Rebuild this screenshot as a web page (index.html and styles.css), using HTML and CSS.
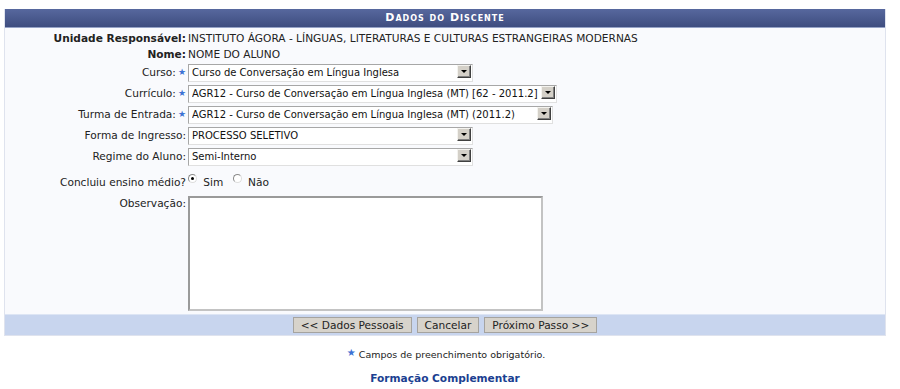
FILE: index.html
```html
<!DOCTYPE html>
<html lang="pt-BR">
<head>
    <meta charset="UTF-8">
    <meta name="viewport" content="width=device-width, initial-scale=1.0">
    <title>Dados do Discente</title>
    <link rel="stylesheet" href="styles.css">
</head>
<body>

    <form class="formulario">
        <div class="titulo">Dados do Discente</div>

        <div class="campos">
            <div class="rotulo negrito linha-texto">Unidade Responsável:</div>
            <div class="valor linha-texto">INSTITUTO ÁGORA - LÍNGUAS, LITERATURAS E CULTURAS ESTRANGEIRAS MODERNAS</div>

            <div class="rotulo negrito linha-texto">Nome:</div>
            <div class="valor linha-texto">NOME DO ALUNO</div>

            <div class="rotulo linha-combo primeiro">Curso:<span class="obrigatorio">&#9733;</span></div>
            <div class="valor linha-combo primeiro">
                <span class="combo largura-curta">
                    <select><option>Curso de Conversação em Língua Inglesa</option></select>
                    <span class="seta"></span>
                </span>
            </div>

            <div class="rotulo linha-combo">Currículo:<span class="obrigatorio">&#9733;</span></div>
            <div class="valor linha-combo">
                <span class="combo largura-curriculo">
                    <select><option>AGR12 - Curso de Conversação em Língua Inglesa (MT) [62 - 2011.2]</option></select>
                    <span class="seta"></span>
                </span>
            </div>

            <div class="rotulo linha-combo">Turma de Entrada:<span class="obrigatorio">&#9733;</span></div>
            <div class="valor linha-combo">
                <span class="combo largura-turma">
                    <select><option>AGR12 - Curso de Conversação em Língua Inglesa (MT) (2011.2)</option></select>
                    <span class="seta"></span>
                </span>
            </div>

            <div class="rotulo linha-combo">Forma de Ingresso:</div>
            <div class="valor linha-combo">
                <span class="combo largura-curta">
                    <select><option>PROCESSO SELETIVO</option></select>
                    <span class="seta"></span>
                </span>
            </div>

            <div class="rotulo linha-combo">Regime do Aluno:</div>
            <div class="valor linha-combo">
                <span class="combo largura-curta">
                    <select><option>Semi-Interno</option></select>
                    <span class="seta"></span>
                </span>
            </div>

            <div class="rotulo linha-radio">Concluiu ensino médio?</div>
            <div class="valor linha-radio">
                <label class="opcao"><input type="radio" name="medio" checked> Sim</label>
                <label class="opcao"><input type="radio" name="medio"> Não</label>
            </div>

            <div class="rotulo linha-obs">Observação:</div>
            <div class="valor linha-obs">
                <textarea class="observacao"></textarea>
            </div>
        </div>

        <div class="rodape">
            <button type="button">&lt;&lt; Dados Pessoais</button>
            <button type="button">Cancelar</button>
            <button type="button">Próximo Passo &gt;&gt;</button>
        </div>
    </form>

    <p class="aviso"><span class="obrigatorio">&#9733;</span> Campos de preenchimento obrigatório.</p>

    <p class="link-secao"><a href="#">Formação Complementar</a></p>

</body>
</html>
```

FILE: styles.css
```css
body {
    margin: 0;
    padding: 9px 14px 0 4px;
    font-family: "DejaVu Sans", Verdana, sans-serif;
    font-size: 10.6px;
    color: #222;
    background: #fff;
}

/* caixa do formulario */
.formulario {
    width: 880px;
    border: 1px solid #dfe3ee;
    border-top: none;
    background: #f9fafd;
}

.titulo {
    height: 18px;
    line-height: 18px;
    text-align: center;
    color: #fff;
    font-weight: bold;
    font-size: 11px;
    font-variant: small-caps;
    letter-spacing: 1px;
    background: linear-gradient(#57689e, #3e4d7f);
    border-bottom: 1px solid #95a2c6;
}

.campos {
    display: grid;
    grid-template-columns: 181px 1fr;
    column-gap: 2px;
    padding: 2px 0 3px 0;
}

.rotulo {
    text-align: right;
    white-space: nowrap;
}

.negrito {
    font-weight: bold;
}

.linha-texto {
    height: 16px;
    line-height: 16px;
}

.linha-combo {
    margin-top: 3px;
    height: 18px;
    line-height: 18px;
}

.linha-combo.primeiro {
    margin-top: 1px;
}

.linha-radio {
    margin-top: 9px;
    line-height: 16px;
}

.linha-obs {
    margin-top: 6px;
}

.rotulo.linha-obs {
    padding-top: 1px;
}

.obrigatorio {
    color: #3d72d4;
    font-size: 9px;
    margin-left: 2px;
    vertical-align: 1px;
}

/* combos no estilo antigo */
.combo {
    position: relative;
    display: inline-block;
    height: 18px;
    vertical-align: top;
}

.combo select {
    appearance: none;
    -webkit-appearance: none;
    width: 100%;
    height: 18px;
    margin: 0;
    padding: 0 16px 0 3px;
    font-family: "DejaVu Sans", Verdana, sans-serif;
    font-size: 10px;
    color: #111;
    background: #fff;
    border: 1px solid #a7a7a7;
    border-right-color: #e0e0e0;
    border-bottom-color: #e0e0e0;
    border-radius: 0;
}

.seta {
    position: absolute;
    top: 2px;
    right: 2px;
    width: 12px;
    height: 11px;
    background: #d4d0c8;
    border: 1px solid;
    border-color: #f4f3ef #404040 #404040 #f4f3ef;
    box-shadow: inset -1px -1px 0 #808080;
    pointer-events: none;
}

.seta::after {
    content: "";
    position: absolute;
    left: 3px;
    top: 4px;
    border-left: 3px solid transparent;
    border-right: 3px solid transparent;
    border-top: 3px solid #000;
}

.largura-curta {
    width: 285px;
}

.largura-curriculo {
    width: 369px;
}

.largura-turma {
    width: 365px;
}

/* radios */
.opcao {
    margin-right: 6px;
}

.opcao input {
    appearance: none;
    -webkit-appearance: none;
    position: relative;
    width: 9px;
    height: 9px;
    margin: 0 3px 0 0;
    border: 1px solid #8a8a8a;
    border-right-color: #ddd;
    border-bottom-color: #ddd;
    border-radius: 50%;
    background: #fff;
    vertical-align: 3px;
}

.opcao input:checked::after {
    content: "";
    position: absolute;
    left: 2px;
    top: 2px;
    width: 3px;
    height: 3px;
    border-radius: 50%;
    background: #000;
}

.observacao {
    display: block;
    width: 355px;
    height: 115px;
    margin: 0;
    padding: 2px;
    box-sizing: border-box;
    resize: none;
    background: #fff;
    border: 2px solid #c3c3c3;
    border-top-color: #9a9a9a;
    border-left-color: #9a9a9a;
}

/* barra dos botoes */
.rodape {
    display: flex;
    justify-content: center;
    gap: 5px;
    padding: 2px 0;
    background: #c8d5ee;
    border-top: 1px solid #dde5f4;
}

.rodape button {
    height: 16px;
    padding: 0 7px;
    font-family: "DejaVu Sans", Verdana, sans-serif;
    font-size: 10.6px;
    color: #222;
    background: #d7d3cb;
    border: 1px solid #a5a39f;
    border-radius: 0;
}

.aviso {
    margin: 11px 0 0 0;
    text-align: center;
    font-size: 9.5px;
    color: #222;
}

.aviso .obrigatorio {
    font-size: 10px;
    vertical-align: 2px;
}

.link-secao {
    margin: 12px 0 0 0;
    text-align: center;
    font-weight: bold;
}

.link-secao a {
    color: #1b3f91;
    text-decoration: none;
}
```
